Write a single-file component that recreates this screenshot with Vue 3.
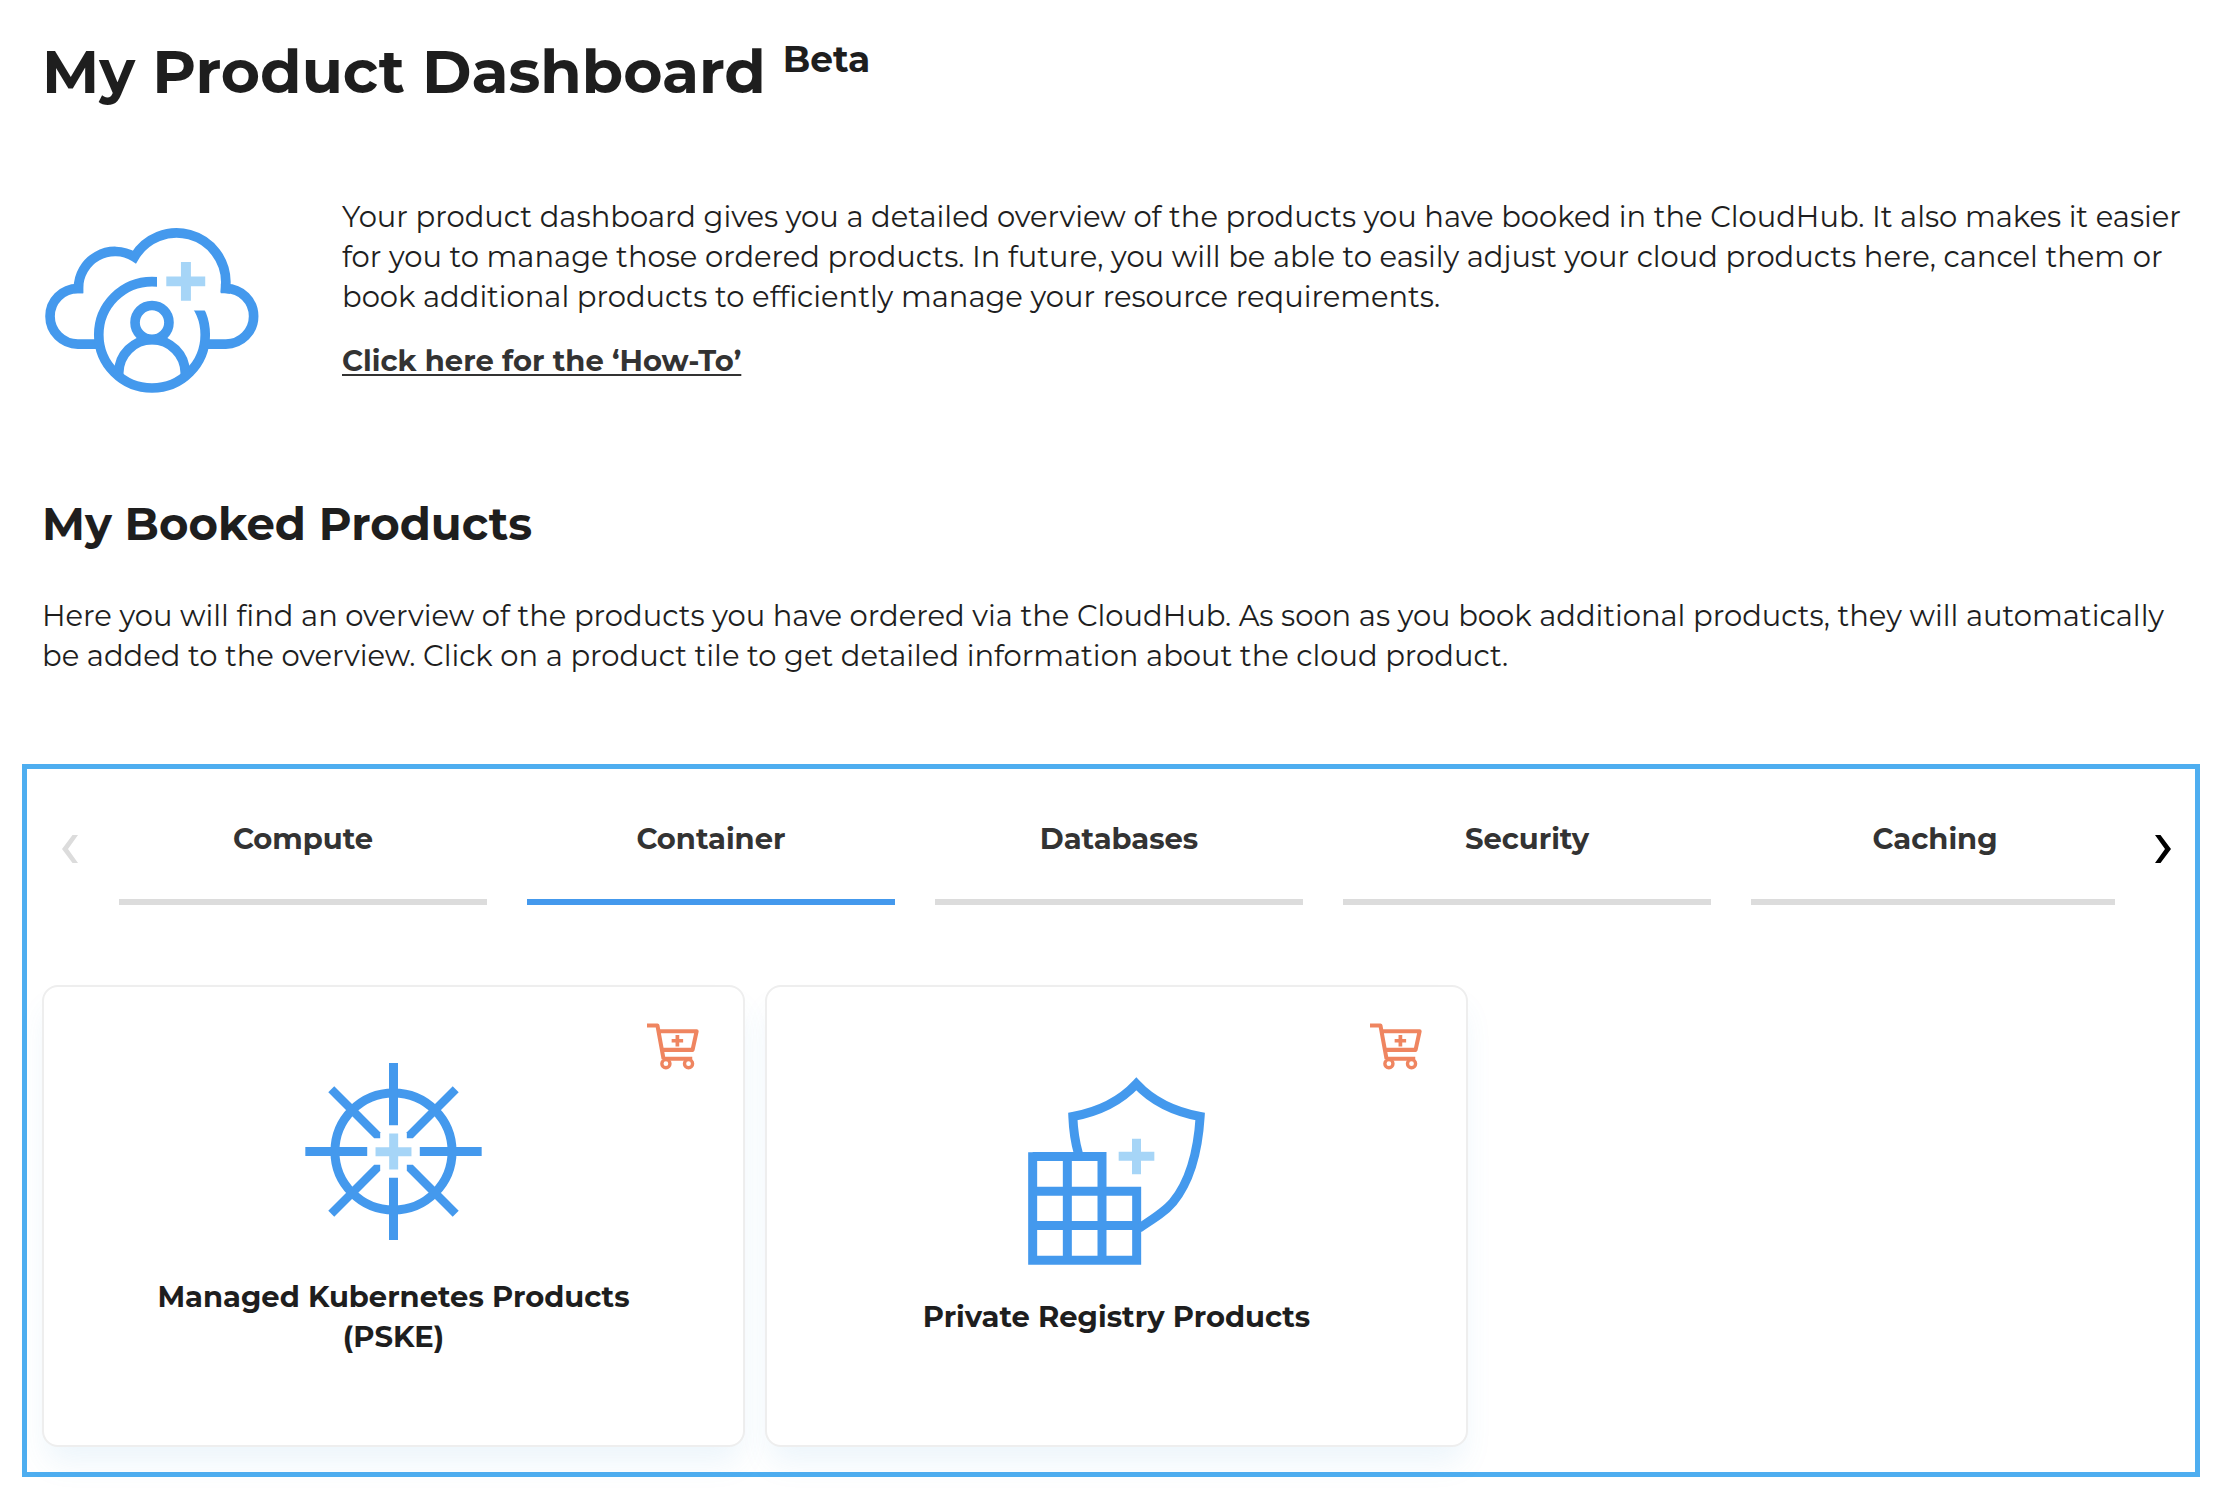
<script setup>
import { ref } from 'vue'

const tabs = ['Compute', 'Container', 'Databases', 'Security', 'Caching']
const active = ref('Container')
const products = [
  { name: 'Managed Kubernetes Products (PSKE)', icon: 'helm' },
  { name: 'Private Registry Products', icon: 'registry' },
]
</script>

<template>
  <main class="page">
    <h1>My Product Dashboard <sup>Beta</sup></h1>

    <section class="intro">
      <svg class="cloud" viewBox="45 54 642 496" aria-hidden="true">
        <defs>
          <clipPath id="ring-gap">
            <polygon points="0,0 381,0 381,302 750,302 750,600 0,600" />
          </clipPath>
        </defs>
        <g class="line">
          <path d="M203 403H143A83.5 83.5 0 0 1 143 236H159" />
          <path d="M145 250V235A110 110 0 0 1 313 141A148 148 0 0 1 588 216Q588 234 586 250" />
          <path d="M573 236H588A83.5 83.5 0 0 1 588 403H532" />
          <circle cx="366" cy="375" r="160" clip-path="url(#ring-gap)" />
          <circle cx="366" cy="338" r="51" />
          <path d="M266 496V490A100 100 0 0 1 466 490V496" />
        </g>
        <path class="plus" d="M453 156h30v44h43v29h-43v44h-30v-44h-44v-29h44z" />
      </svg>
      <div class="intro-text">
        <p>
          Your product dashboard gives you a detailed overview of the products you have booked in the CloudHub. It also makes it easier for you to manage those ordered products. In future, you will be able to easily adjust your cloud products here, cancel them or book additional products to efficiently manage your resource requirements.
        </p>
        <a class="howto" href="#how-to">Click here for the ‘How-To’</a>
      </div>
    </section>

    <section class="booked">
      <h2>My Booked Products</h2>
      <p>
        Here you will find an overview of the products you have ordered via the CloudHub. As soon as you book additional products, they will automatically be added to the overview. Click on a product tile to get detailed information about the cloud product.
      </p>
    </section>

    <section class="panel">
      <div class="tabbar">
        <button class="arrow" type="button" aria-label="Previous categories" disabled>
          <svg viewBox="0 0 16 28"><polygon points="16,0 10.5,0 0,14 10.5,28 16,28 6,14" /></svg>
        </button>
        <div class="tabs" role="tablist">
          <button
            v-for="tab in tabs"
            :key="tab"
            type="button"
            role="tab"
            class="tab"
            :class="{ active: tab === active }"
            :aria-selected="tab === active"
            @click="active = tab"
          >{{ tab }}</button>
        </div>
        <button class="arrow" type="button" aria-label="Next categories">
          <svg viewBox="0 0 16 28"><polygon points="0,0 5.5,0 16,14 5.5,28 0,28 10,14" /></svg>
        </button>
      </div>

      <div class="cards">
        <article v-for="product in products" :key="product.name" class="card">
          <button class="cart" type="button" :aria-label="'Order ' + product.name">
            <svg viewBox="52 162 154 138">
              <path d="M52 169H83L101 268M90 186H199L187 241H98M100 267H186" stroke-width="12" stroke-linejoin="round" />
              <path d="M142 197V231M125 214H159" stroke-width="11" />
              <g class="wheels" stroke-width="10">
                <circle cx="108" cy="282" r="12" />
                <circle cx="175" cy="282" r="12" />
              </g>
            </svg>
          </button>
          <div class="art">
            <svg v-if="product.icon === 'helm'" class="helm" viewBox="47 67 530 532" aria-hidden="true">
              <g class="line">
                <circle cx="312" cy="333" r="176" />
                <path d="M312 67V254M312 412V599M47 333H233M391 333H577" />
              </g>
              <g class="spokes">
                <polygon points="134,137 272,275 272,293 254,293 116,155" />
                <polygon points="490,137 352,275 352,293 370,293 508,155" />
                <polygon points="134,529 272,391 272,373 254,373 116,511" />
                <polygon points="490,529 352,391 352,373 370,373 508,511" />
              </g>
              <path class="plus" d="M299 279h27v41h40v27h-40v40h-27v-40h-41v-27h41z" />
            </svg>
            <svg v-else class="registry" viewBox="55 52 531 563" aria-hidden="true">
              <g class="line">
                <path d="M69 290H277V601M69 394H381V601H69V277M69 497H381M173 290V601" />
                <path d="M206 280C196 245 191 208 189.500 170C270 155 330 126 380 72C430 126 490 155 571.500 170C564 290 535 372 490 427C466 456 430 478 388 505" />
              </g>
              <path class="plus" d="M367 237h27v39h40v27h-40v40h-27v-40h-40v-27h40z" />
            </svg>
          </div>
          <h3>{{ product.name }}</h3>
        </article>
      </div>
    </section>
  </main>
</template>

<style>
body {
  margin: 0;
  background: #fff;
}
</style>

<style scoped>
.page {
  padding: 32px 24px 20px 22px;
  font-family: Montserrat, Inter, "Open Sans", sans-serif;
  font-size: 29px;
  line-height: 40px;
  color: #1e1e1e;
}
h1, h2, h3, p {
  margin: 0;
}
h1 {
  padding-left: 20px;
  font-size: 60px;
  line-height: 80px;
  font-weight: 700;
}
sup {
  font-size: 36px;
  line-height: 1;
}
.intro {
  display: flex;
  align-items: flex-start;
  gap: 83px;
  margin-top: 85px;
  padding: 0 16px 0 23px;
}
.cloud {
  flex: none;
  width: 214px;
  height: 165px;
  margin-top: 31px;
}
.line {
  fill: none;
  stroke: #4499ed;
  stroke-width: 29;
}
.helm .line,
.registry .line {
  stroke-width: 27;
}
.spokes {
  fill: #4499ed;
}
.plus {
  fill: #a6d5f7;
}
.howto {
  display: inline-block;
  margin-top: 24px;
  color: #333;
  font-weight: 700;
  text-decoration-thickness: 2px;
  text-underline-offset: 3px;
  text-decoration-skip-ink: none;
}
.booked {
  margin-top: 101px;
  padding: 0 20px;
}
h2 {
  font-size: 45px;
  line-height: 60px;
  font-weight: 700;
}
.booked p {
  margin-top: 42px;
}
.panel {
  margin-top: 88px;
  padding: 40px 4px 25px 15px;
  border: 5px solid #4eaef0;
}
.tabbar {
  display: flex;
  align-items: center;
}
.arrow {
  flex: none;
  width: 56px;
  height: 60px;
  margin-bottom: 16px;
  padding: 0;
  border: 0;
  background: none;
  color: #000;
}
.arrow:disabled {
  color: #dcdcdc;
}
.arrow svg {
  display: block;
  width: 16px;
  height: 28px;
  margin: 0 auto;
  fill: currentColor;
}
.tabs {
  display: grid;
  flex: 1;
  grid-template-columns: repeat(5, calc((100% - 156px) / 5));
  gap: 40px;
  margin: 0 20px 0 21px;
  overflow: hidden;
}
.tab {
  padding: 10px 0 40px;
  border: 0;
  border-bottom: 6px solid #dcdcdc;
  background: none;
  color: #333;
  font: inherit;
  font-weight: 700;
}
.tab.active {
  border-color: #4499ed;
}
.cards {
  display: grid;
  grid-template-columns: repeat(3, 1fr);
  gap: 20px;
  margin-top: 80px;
}
.card {
  position: relative;
  display: flex;
  flex-direction: column;
  align-items: center;
  justify-content: center;
  box-sizing: border-box;
  min-height: 462px;
  padding: 0 80px 24px;
  border: 2px solid #eee;
  border-radius: 16px;
  background: #fff;
  box-shadow: 0 20px 30px -5px rgba(68, 160, 220, 0.1);
}
.cart {
  position: absolute;
  top: 36px;
  right: 44px;
  padding: 0;
  border: 0;
  background: none;
}
.cart svg {
  display: block;
  width: 52px;
  height: 47px;
  fill: none;
  stroke: #ef8560;
}
.wheels {
  fill: #fff;
}
.art {
  display: grid;
  place-items: center;
  height: 200px;
}
.helm {
  width: 177px;
  height: 177px;
}
.registry {
  width: 177px;
  height: 188px;
}
h3 {
  margin-top: 26px;
  font-size: 29px;
  line-height: 40px;
  font-weight: 700;
  text-align: center;
}
</style>
